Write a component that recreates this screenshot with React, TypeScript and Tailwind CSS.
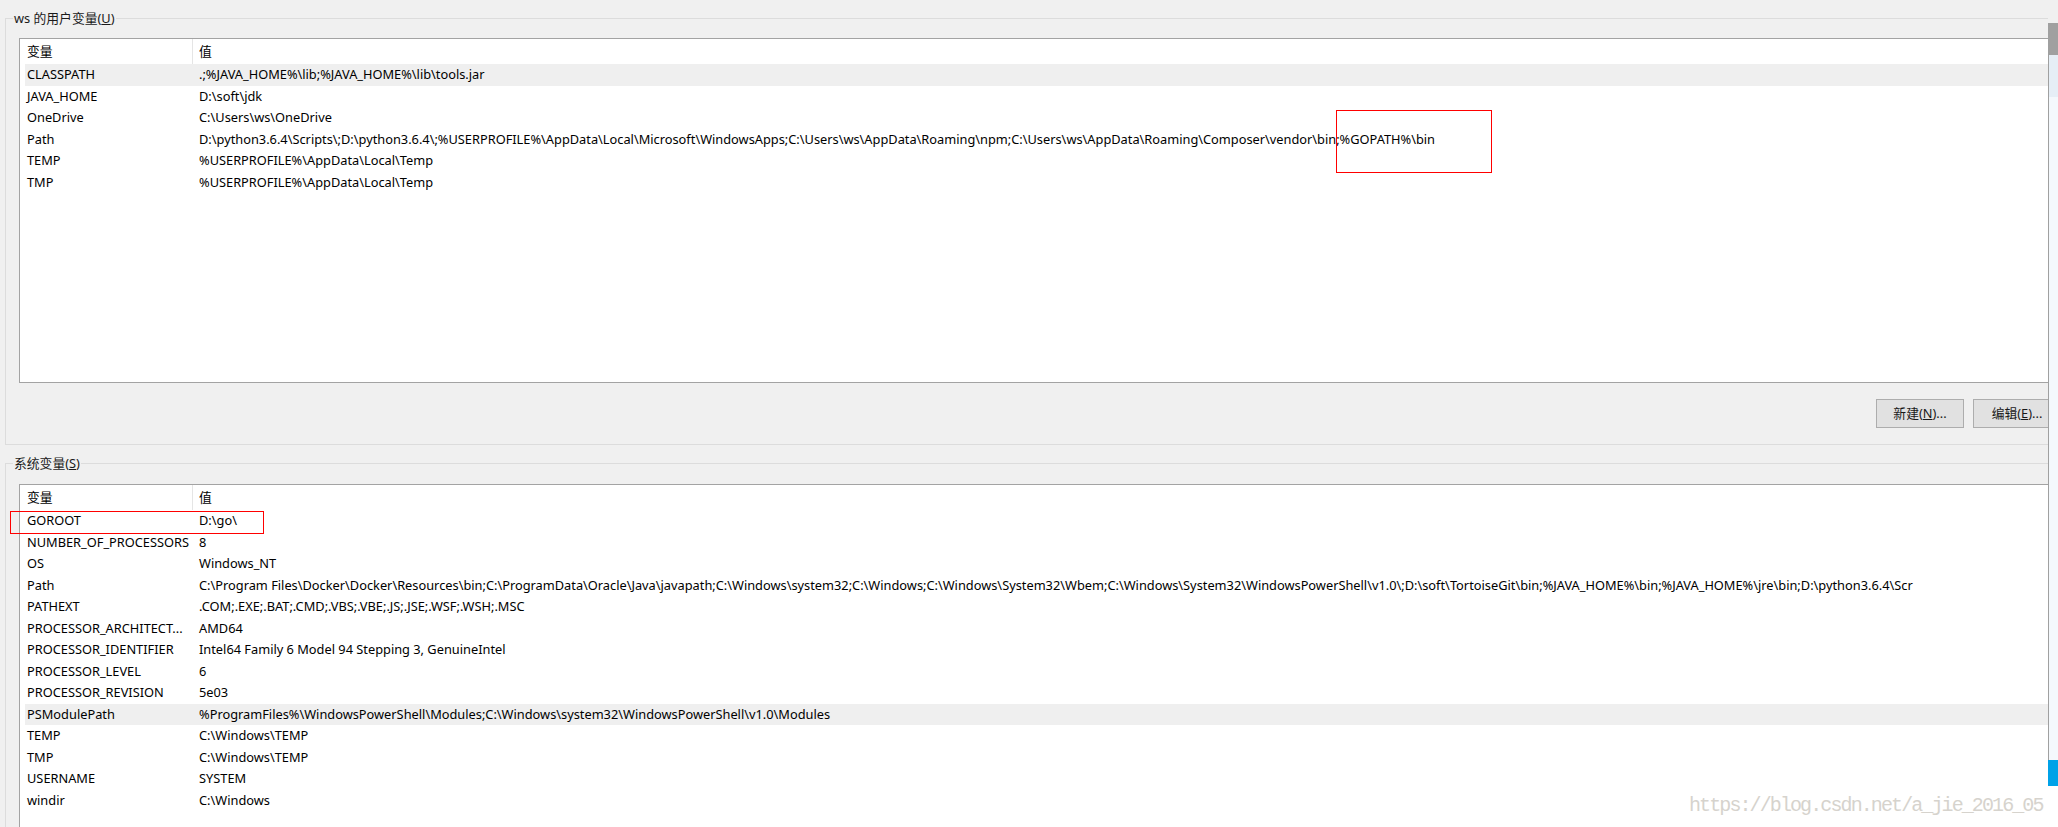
import React from 'react';

type EnvVar = { name: string; value: string };

// user-level variables (upper list)
const userVars: EnvVar[] = [
  { name: 'CLASSPATH', value: '.;%JAVA_HOME%\\lib;%JAVA_HOME%\\lib\\tools.jar' },
  { name: 'JAVA_HOME', value: 'D:\\soft\\jdk' },
  { name: 'OneDrive', value: 'C:\\Users\\ws\\OneDrive' },
  {
    name: 'Path',
    value:
      'D:\\python3.6.4\\Scripts\\;D:\\python3.6.4\\;%USERPROFILE%\\AppData\\Local\\Microsoft\\WindowsApps;C:\\Users\\ws\\AppData\\Roaming\\npm;C:\\Users\\ws\\AppData\\Roaming\\Composer\\vendor\\bin;%GOPATH%\\bin',
  },
  { name: 'TEMP', value: '%USERPROFILE%\\AppData\\Local\\Temp' },
  { name: 'TMP', value: '%USERPROFILE%\\AppData\\Local\\Temp' },
];

// system variables (lower list)
const systemVars: EnvVar[] = [
  { name: 'GOROOT', value: 'D:\\go\\' },
  { name: 'NUMBER_OF_PROCESSORS', value: '8' },
  { name: 'OS', value: 'Windows_NT' },
  {
    name: 'Path',
    value:
      'C:\\Program Files\\Docker\\Docker\\Resources\\bin;C:\\ProgramData\\Oracle\\Java\\javapath;C:\\Windows\\system32;C:\\Windows;C:\\Windows\\System32\\Wbem;C:\\Windows\\System32\\WindowsPowerShell\\v1.0\\;D:\\soft\\TortoiseGit\\bin;%JAVA_HOME%\\bin;%JAVA_HOME%\\jre\\bin;D:\\python3.6.4\\Scr',
  },
  { name: 'PATHEXT', value: '.COM;.EXE;.BAT;.CMD;.VBS;.VBE;.JS;.JSE;.WSF;.WSH;.MSC' },
  { name: 'PROCESSOR_ARCHITECT...', value: 'AMD64' },
  { name: 'PROCESSOR_IDENTIFIER', value: 'Intel64 Family 6 Model 94 Stepping 3, GenuineIntel' },
  { name: 'PROCESSOR_LEVEL', value: '6' },
  { name: 'PROCESSOR_REVISION', value: '5e03' },
  {
    name: 'PSModulePath',
    value: '%ProgramFiles%\\WindowsPowerShell\\Modules;C:\\Windows\\system32\\WindowsPowerShell\\v1.0\\Modules',
  },
  { name: 'TEMP', value: 'C:\\Windows\\TEMP' },
  { name: 'TMP', value: 'C:\\Windows\\TEMP' },
  { name: 'USERNAME', value: 'SYSTEM' },
  { name: 'windir', value: 'C:\\Windows' },
];

const VarList = ({ vars, activeName, height }: { vars: EnvVar[]; activeName: string; height: string }) => (
  <div className={`${height} overflow-hidden border border-r-0 border-[#a3a3a3] bg-white`}>
    <div className="flex h-[25px] items-center whitespace-nowrap">
      <div className="w-[172px] shrink-0 pl-[7px]">变量</div>
      <div className="h-full w-px bg-[#e5e5e5]" />
      <div className="pl-[6px]">值</div>
    </div>
    {vars.map((v) => (
      <div
        key={v.name + v.value}
        className={`ml-[5px] flex h-[21.5px] items-center whitespace-nowrap ${v.name === activeName ? 'bg-[#efefef]' : ''}`}
      >
        <div className="w-[172px] shrink-0 pl-[2px]">{v.name}</div>
        <div className="pl-[2px]">{v.value}</div>
      </div>
    ))}
  </div>
);

const WinButton = ({ label, hotkey }: { label: string; hotkey: string }) => (
  <button className="flex h-[29px] w-[88px] shrink-0 items-center justify-center border border-[#adadad] bg-[#e1e1e1] text-[#1a1a1a]">
    {label}(<u>{hotkey}</u>)...
  </button>
);

export default function App() {
  return (
    <div className="relative flex h-[827px] w-[2058px] overflow-hidden bg-[#f0f0f0] font-['Noto_Sans','Noto_Sans_CJK_SC',sans-serif] text-[12.8px] text-black">
      <div className="w-[2048px] shrink-0 overflow-hidden">
        {/* user variables group */}
        <fieldset className="ml-[5px] mt-[8px] border border-r-0 border-[#dcdcdc] pb-[16px]">
          <legend className="ml-[7px] px-[1px] leading-[20px] text-[#1a1a1a]">
            ws 的用户变量(<u>U</u>)
          </legend>
          <div className="mt-[10px] pl-[13px]">
            <VarList vars={userVars} activeName="CLASSPATH" height="h-[345px]" />
          </div>
          <div className="mr-[-13px] mt-[16px] flex justify-end gap-[9px]">
            <WinButton label="新建" hotkey="N" />
            <WinButton label="编辑" hotkey="E" />
          </div>
        </fieldset>

        {/* system variables group */}
        <fieldset className="ml-[5px] mt-[8px] border border-r-0 border-[#dcdcdc]">
          <legend className="ml-[7px] px-[1px] leading-[20px] text-[#1a1a1a]">
            系统变量(<u>S</u>)
          </legend>
          <div className="mt-[11px] pl-[13px]">
            <VarList vars={systemVars} activeName="PSModulePath" height="h-[420px]" />
          </div>
        </fieldset>
      </div>

      {/* outer window scrollbar */}
      <div className="flex w-[10px] shrink-0 flex-col pt-[23px]">
        <div className="flex flex-1 flex-col border-l border-[#a0a0a0]">
          <div className="h-[32px] bg-[#a0a0a0]" />
          <div className="h-[42px] bg-[#e6eef6]" />
          <div className="flex-1 bg-[#f4f8fc]" />
        </div>
        <div className="h-[26px] bg-[#00a2e8]" />
        <div className="h-[41px] bg-white" />
      </div>

      {/* annotation boxes drawn over the screenshot */}
      <div className="absolute left-[1336px] top-[110px] h-[63px] w-[156px] border border-[#ff0000]" />
      <div className="absolute left-[10px] top-[511px] h-[23px] w-[254px] border border-[#ff0000]" />

      {/* blog watermark */}
      <div className="absolute left-[1689px] top-[794px] font-['Liberation_Mono',monospace] text-[20px] leading-[24px] tracking-[-1.9px] text-[#d6d3cd]">
        https://blog.csdn.net/a_jie_2016_05
      </div>
    </div>
  );
}
